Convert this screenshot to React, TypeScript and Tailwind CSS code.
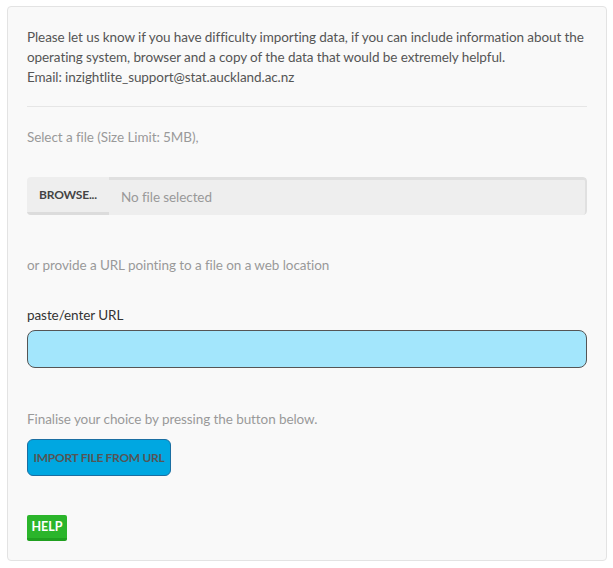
import React from 'react';

export default function App() {
  return (
    <div className="min-h-[568px] bg-white pt-[6px] px-[7px] font-['Lato',sans-serif] text-[13.5px] tracking-[-0.08px] leading-[20px]">
      <div className="w-[600px] h-[555px] bg-[#f9f9f9] border border-[#e3e3e3] rounded-[4px] px-[19px] pt-[20px]">
        <p className="text-[#555]">
          Please let us know if you have difficulty importing data, if you can include information about the
          operating system, browser and a copy of the data that would be extremely helpful.
          <br />
          Email: inzightlite_support@stat.auckland.ac.nz
        </p>
        <hr className="mt-[19px] border-t border-[#e6e6e6]" />
        <p className="mt-[20px] text-[#999]">Select a file (Size Limit: 5MB),</p>

        <div className="mt-[30px] flex h-[38px] rounded-[4px] overflow-hidden">
          <button className="w-[82px] bg-[#eeeeee] border-b-[3px] border-[#dcdcdc] text-[12px] font-bold text-[#444] tracking-[-0.2px]">
            BROWSE...
          </button>
          <div className="flex-1 flex items-center bg-[#eeeeee] border-t-[3px] border-r-[2px] border-[#e0e0e0] rounded-r-[4px] px-[12px] pb-[2px] text-[#999]">
            No file selected
          </div>
        </div>

        <p className="mt-[40px] text-[#999]">or provide a URL pointing to a file on a web location</p>

        <label className="block mt-[30px] text-[#333]">paste/enter URL</label>
        <input
          type="text"
          className="block mt-[5px] w-full h-[38px] bg-[#a3e6fc] border border-[#555] rounded-[8px] outline-none"
        />

        <p className="mt-[41px] text-[#999]">Finalise your choice by pressing the button below.</p>
        <button className="mt-[10px] h-[37px] w-[144px] bg-[#00a7e1] border border-[#1a6ea2] rounded-[6px] text-[12px] font-bold text-[#555] tracking-[-0.3px]">
          IMPORT FILE FROM URL
        </button>

        <div className="mt-[39px]">
          <button className="h-[26px] w-[40px] bg-[#2bb52b] border-b-[3px] border-[#20a020] rounded-[2px] text-[12.5px] font-bold text-white tracking-[0px]">
            HELP
          </button>
        </div>
      </div>
    </div>
  );
}
